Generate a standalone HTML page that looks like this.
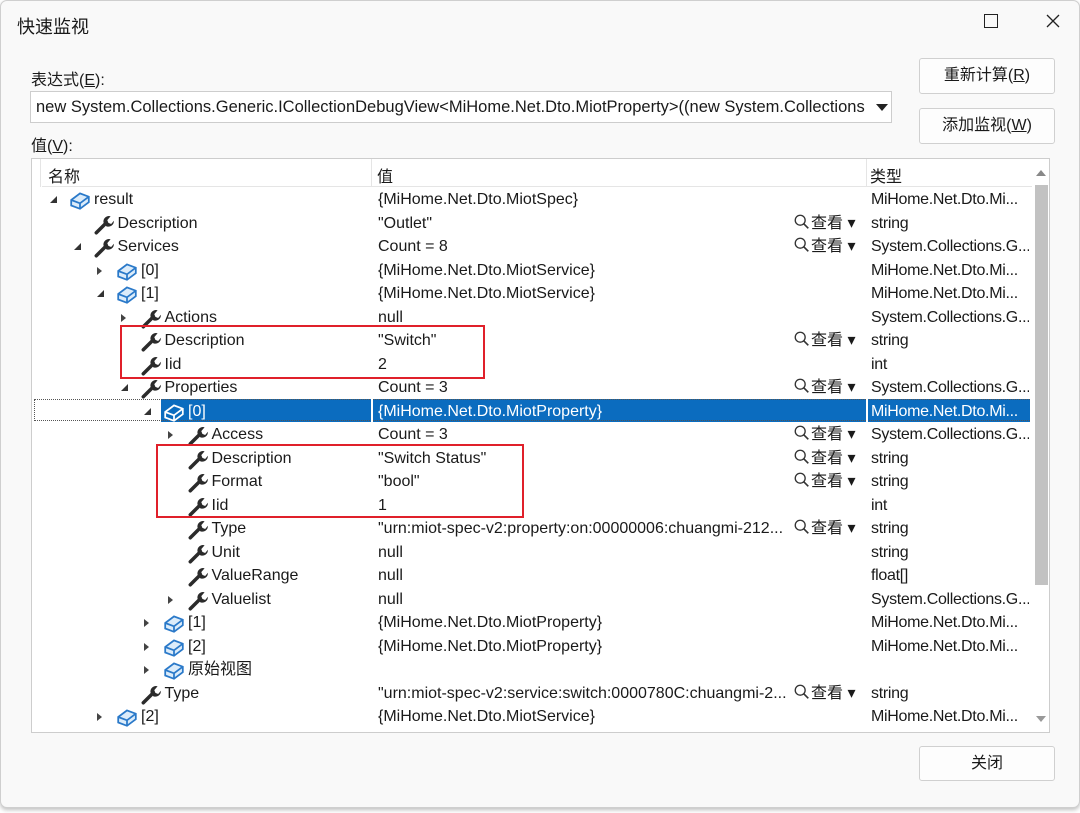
<!DOCTYPE html>
<html><head><meta charset="utf-8"><style>
body{margin:0;width:1080px;height:813px;background:#fff;font-family:"Liberation Sans","Noto Sans CJK SC",sans-serif;position:relative;overflow:hidden;color:#1a1a1a}
.win{position:absolute;left:0;top:0;width:1078px;height:806px;background:#f9f9f9;border:1px solid #cfcfcf;border-radius:7px;box-shadow:0 2px 4px rgba(0,0,0,.25)}
.a{position:absolute;white-space:nowrap}
.btn{position:absolute;background:#fdfdfd;border:1px solid #d0d0d0;border-radius:3px;font-size:16px;text-align:center}
.grid{position:absolute;left:30px;top:157px;width:1017px;height:573px;background:#fff;border:1px solid #cdcdcd;overflow:hidden}
.hdr{position:absolute;left:0;top:0;height:28px;width:1000px;font-size:16px}
.rows{position:absolute;left:-30px;top:29px}
.r{position:relative;height:23.5px;width:1030px;font-size:16px;line-height:23.5px}
.r>*{position:absolute;white-space:nowrap}
.ex{top:8px;left:calc(48px + var(--l)*23.5px);width:0;height:0}
.ex.o{border-left:7px solid transparent;border-bottom:7px solid #333}
.ex.c{border-top:4px solid transparent;border-bottom:4px solid transparent;border-left:5px solid #444;top:8px}
.ic{left:calc(67px + var(--l)*23.5px);top:1px;width:22px;height:22px}
.n{left:calc(92px + var(--l)*23.5px)}
.v{left:376px;max-width:412px;overflow:hidden}
.k{left:791px}
.t{left:869px;width:158px;overflow:hidden;letter-spacing:-0.3px}
.sel .v,.sel .t{color:#fff}
.selbg{position:absolute;background:#0b6cbf}
.red{position:absolute;border:2px solid #e0202a}
</style></head><body>
<div class="win">
<div class="a" style="left:16px;top:12px;font-size:18px">快速监视</div>
<div class="a" style="left:983px;top:13px;width:12px;height:12px;border:1.5px solid #222"></div>
<svg class="a" style="left:1045px;top:13px" width="14" height="14"><path d="M1 1 L13 13 M13 1 L1 13" stroke="#222" stroke-width="1.3"/></svg>
<div class="a" style="left:30px;top:65px;font-size:16px">表达式(<u>E</u>):</div>
<div class="a" style="left:29px;top:90px;width:860px;height:30px;background:#fff;border:1px solid #cdcdcd;font-size:16.5px;line-height:30px;overflow:hidden"><span style="padding-left:5px">new System.Collections.Generic.ICollectionDebugView&lt;MiHome.Net.Dto.MiotProperty&gt;((new System.Collections</span></div>
<div class="a" style="left:869px;top:91px;width:20px;height:30px;background:#fff"></div>
<div class="a" style="left:875px;top:103px;border-left:6px solid transparent;border-right:6px solid transparent;border-top:7px solid #222"></div>
<div class="a" style="left:30px;top:131px;font-size:16px">值(<u>V</u>):</div>
<div class="btn" style="left:918px;top:57px;width:134px;height:34px;line-height:34px">重新计算(<u>R</u>)</div>
<div class="btn" style="left:918px;top:107px;width:134px;height:34px;line-height:34px">添加监视(<u>W</u>)</div>
<div class="btn" style="left:918px;top:745px;width:134px;height:33px;line-height:33px">关闭</div>
<div class="grid">
 <div class="hdr"><span class="a" style="left:16px;top:4px">名称</span><span class="a" style="left:345px;top:4px">值</span><span class="a" style="left:838px;top:4px">类型</span>
 <div class="a" style="left:8px;top:0;width:1px;height:28px;background:#e5e5e5"></div>
 <div class="a" style="left:339px;top:0;width:1px;height:28px;background:#e5e5e5"></div>
 <div class="a" style="left:834px;top:0;width:1px;height:28px;background:#e5e5e5"></div>
 <div class="a" style="left:10px;top:27px;width:990px;height:1px;background:#e5e5e5"></div></div>
 <div class="a" style="left:1003px;top:26px;width:13px;height:400px;background:#c2c2c2"></div>
 <div class="a" style="left:1004px;top:11px;border-left:5px solid transparent;border-right:5px solid transparent;border-bottom:6px solid #888"></div>
 <div class="a" style="left:1004px;top:557px;border-left:5px solid transparent;border-right:5px solid transparent;border-top:6px solid #999"></div>
 <div class="selbg" style="left:129px;top:240px;width:869px;height:23px"></div>
 <div class="a" style="left:2px;top:240px;width:996px;height:22px;border:1px dotted #555;box-sizing:border-box;border-right:none"></div>
 <div class="a" style="left:834px;top:240px;width:2px;height:23px;background:#fff"></div>
 <div class="a" style="left:339px;top:240px;width:2px;height:23px;background:#fff"></div>
<svg width="0" height="0" style="position:absolute"><defs>
<symbol id="w" viewBox="0 0 20 20"><path d="M3 18 L11 10" stroke="#2b2b2b" stroke-width="3.2" stroke-linecap="round"/><path d="M9.5 8.5 A5 5 0 0 1 16 3 L13 6.5 L14 9 L16.5 10 L19 7 A5 5 0 0 1 12 12 Z" fill="#2b2b2b"/></symbol>
<symbol id="c" viewBox="0 0 20 20"><path d="M2 10 L10 4 L18 7 L18 12 L10 18 L2 15 Z" fill="#dcecfa" stroke="#2a79c9" stroke-width="1.6"/><path d="M2 10 L10 13 L18 7 M10 13 L10 18" fill="none" stroke="#2a79c9" stroke-width="1.6"/></symbol>
<symbol id="cw" viewBox="0 0 20 20"><path d="M2 10 L10 4 L18 7 L18 12 L10 18 L2 15 Z" fill="none" stroke="#fff" stroke-width="1.6"/><path d="M2 10 L10 13 L18 7 M10 13 L10 18" fill="none" stroke="#fff" stroke-width="1.6"/></symbol>
<symbol id="q" viewBox="0 0 20 20"><circle cx="8" cy="8" r="5.5" fill="none" stroke="#333" stroke-width="1.5"/><path d="M12 12 L17 17" stroke="#333" stroke-width="1.8"/></symbol>
</defs></svg>
<div class="rows">
<div class="r" style="--l:0"><i class="ex o"></i><svg class="ic"><use href="#c"/></svg><span class="n">result</span><span class="v">{MiHome.Net.Dto.MiotSpec}</span><span class="t">MiHome.Net.Dto.Mi...</span></div>
<div class="r" style="--l:1"><svg class="ic"><use href="#w"/></svg><span class="n">Description</span><span class="v">"Outlet"</span><span class="k"><svg width="18" height="18" style="vertical-align:-3px"><use href="#q"/></svg>查看 ▾</span><span class="t">string</span></div>
<div class="r" style="--l:1"><i class="ex o"></i><svg class="ic"><use href="#w"/></svg><span class="n">Services</span><span class="v">Count = 8</span><span class="k"><svg width="18" height="18" style="vertical-align:-3px"><use href="#q"/></svg>查看 ▾</span><span class="t">System.Collections.G...</span></div>
<div class="r" style="--l:2"><i class="ex c"></i><svg class="ic"><use href="#c"/></svg><span class="n">[0]</span><span class="v">{MiHome.Net.Dto.MiotService}</span><span class="t">MiHome.Net.Dto.Mi...</span></div>
<div class="r" style="--l:2"><i class="ex o"></i><svg class="ic"><use href="#c"/></svg><span class="n">[1]</span><span class="v">{MiHome.Net.Dto.MiotService}</span><span class="t">MiHome.Net.Dto.Mi...</span></div>
<div class="r" style="--l:3"><i class="ex c"></i><svg class="ic"><use href="#w"/></svg><span class="n">Actions</span><span class="v">null</span><span class="t">System.Collections.G...</span></div>
<div class="r" style="--l:3"><svg class="ic"><use href="#w"/></svg><span class="n">Description</span><span class="v">"Switch"</span><span class="k"><svg width="18" height="18" style="vertical-align:-3px"><use href="#q"/></svg>查看 ▾</span><span class="t">string</span></div>
<div class="r" style="--l:3"><svg class="ic"><use href="#w"/></svg><span class="n">Iid</span><span class="v">2</span><span class="t">int</span></div>
<div class="r" style="--l:3"><i class="ex o"></i><svg class="ic"><use href="#w"/></svg><span class="n">Properties</span><span class="v">Count = 3</span><span class="k"><svg width="18" height="18" style="vertical-align:-3px"><use href="#q"/></svg>查看 ▾</span><span class="t">System.Collections.G...</span></div>
<div class="r sel" style="--l:4"><i class="ex o"></i><svg class="ic"><use href="#cw"/></svg><span class="n" style="color:#fff">[0]</span><span class="v">{MiHome.Net.Dto.MiotProperty}</span><span class="t">MiHome.Net.Dto.Mi...</span></div>
<div class="r" style="--l:5"><i class="ex c"></i><svg class="ic"><use href="#w"/></svg><span class="n">Access</span><span class="v">Count = 3</span><span class="k"><svg width="18" height="18" style="vertical-align:-3px"><use href="#q"/></svg>查看 ▾</span><span class="t">System.Collections.G...</span></div>
<div class="r" style="--l:5"><svg class="ic"><use href="#w"/></svg><span class="n">Description</span><span class="v">"Switch Status"</span><span class="k"><svg width="18" height="18" style="vertical-align:-3px"><use href="#q"/></svg>查看 ▾</span><span class="t">string</span></div>
<div class="r" style="--l:5"><svg class="ic"><use href="#w"/></svg><span class="n">Format</span><span class="v">"bool"</span><span class="k"><svg width="18" height="18" style="vertical-align:-3px"><use href="#q"/></svg>查看 ▾</span><span class="t">string</span></div>
<div class="r" style="--l:5"><svg class="ic"><use href="#w"/></svg><span class="n">Iid</span><span class="v">1</span><span class="t">int</span></div>
<div class="r" style="--l:5"><svg class="ic"><use href="#w"/></svg><span class="n">Type</span><span class="v">"urn:miot-spec-v2:property:on:00000006:chuangmi-212...</span><span class="k"><svg width="18" height="18" style="vertical-align:-3px"><use href="#q"/></svg>查看 ▾</span><span class="t">string</span></div>
<div class="r" style="--l:5"><svg class="ic"><use href="#w"/></svg><span class="n">Unit</span><span class="v">null</span><span class="t">string</span></div>
<div class="r" style="--l:5"><svg class="ic"><use href="#w"/></svg><span class="n">ValueRange</span><span class="v">null</span><span class="t">float[]</span></div>
<div class="r" style="--l:5"><i class="ex c"></i><svg class="ic"><use href="#w"/></svg><span class="n">Valuelist</span><span class="v">null</span><span class="t">System.Collections.G...</span></div>
<div class="r" style="--l:4"><i class="ex c"></i><svg class="ic"><use href="#c"/></svg><span class="n">[1]</span><span class="v">{MiHome.Net.Dto.MiotProperty}</span><span class="t">MiHome.Net.Dto.Mi...</span></div>
<div class="r" style="--l:4"><i class="ex c"></i><svg class="ic"><use href="#c"/></svg><span class="n">[2]</span><span class="v">{MiHome.Net.Dto.MiotProperty}</span><span class="t">MiHome.Net.Dto.Mi...</span></div>
<div class="r" style="--l:4"><i class="ex c"></i><svg class="ic"><use href="#c"/></svg><span class="n">原始视图</span></div>
<div class="r" style="--l:3"><svg class="ic"><use href="#w"/></svg><span class="n">Type</span><span class="v">"urn:miot-spec-v2:service:switch:0000780C:chuangmi-2...</span><span class="k"><svg width="18" height="18" style="vertical-align:-3px"><use href="#q"/></svg>查看 ▾</span><span class="t">string</span></div>
<div class="r" style="--l:2"><i class="ex c"></i><svg class="ic"><use href="#c"/></svg><span class="n">[2]</span><span class="v">{MiHome.Net.Dto.MiotService}</span><span class="t">MiHome.Net.Dto.Mi...</span></div>
</div>
</div>
<div class="red" style="left:119px;top:324px;width:361px;height:50px"></div>
<div class="red" style="left:155px;top:443px;width:364px;height:70px"></div>
</div>
</body></html>
